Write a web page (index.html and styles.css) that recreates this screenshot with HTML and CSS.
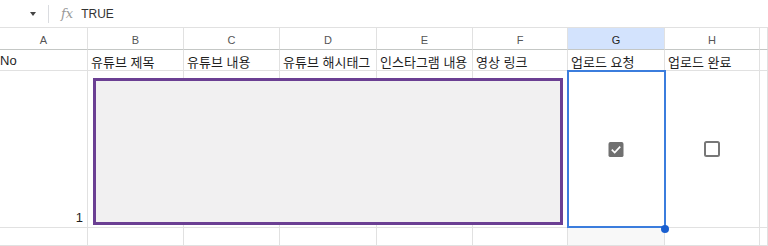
FILE: index.html
```html
<!DOCTYPE html>
<html lang="ko">
<head>
    <meta charset="UTF-8">
    <title>Sheet</title>
    <link rel="stylesheet" href="styles.css">
</head>
<body>
    <div class="formula-bar">
        <span class="name-arrow"></span>
        <span class="sep"></span>
        <span class="fx">fx</span>
        <span class="formula">TRUE</span>
    </div>
    <div class="sheet">
        <div class="grid">
            <div class="hd">A</div>
            <div class="hd">B</div>
            <div class="hd">C</div>
            <div class="hd">D</div>
            <div class="hd">E</div>
            <div class="hd">F</div>
            <div class="hd sel">G</div>
            <div class="hd">H</div>
            <div class="hd"></div>

            <div class="cell first">No</div>
            <div class="cell">유튜브 제목</div>
            <div class="cell">유튜브 내용</div>
            <div class="cell">유튜브 해시태그</div>
            <div class="cell">인스타그램 내용</div>
            <div class="cell">영상 링크</div>
            <div class="cell">업로드 요청</div>
            <div class="cell">업로드 완료</div>
            <div class="cell"></div>

            <div class="cell tall num">1</div>
            <div class="cell tall"></div>
            <div class="cell tall"></div>
            <div class="cell tall"></div>
            <div class="cell tall"></div>
            <div class="cell tall"></div>
            <div class="cell tall center"><span class="check on">
                <svg viewBox="0 0 16 16" width="16" height="16"><rect x="0" y="0" width="16" height="16" rx="2" fill="#707070"/><path d="M3.5 8.2 L6.6 11.2 L12.5 5" stroke="#fff" stroke-width="1.8" fill="none"/></svg>
            </span></div>
            <div class="cell tall center"><span class="check">
                <svg viewBox="0 0 16 16" width="16" height="16"><rect x="1" y="1" width="14" height="14" rx="1.5" fill="none" stroke="#777" stroke-width="2"/></svg>
            </span></div>
            <div class="cell tall"></div>

            <div class="cell"></div>
            <div class="cell"></div>
            <div class="cell"></div>
            <div class="cell"></div>
            <div class="cell"></div>
            <div class="cell"></div>
            <div class="cell shade"></div>
            <div class="cell"></div>
            <div class="cell"></div>
        </div>
        <div class="overlay-box"></div>
        <div class="selection"></div>
        <div class="handle"></div>
    </div>
</body>
</html>
```

FILE: styles.css
```css
body {
    margin: 0;
    font-family: "Liberation Sans", Arial, "Noto Sans CJK KR", sans-serif;
    background: #fff;
    width: 768px;
    height: 246px;
    overflow: hidden;
}
.formula-bar {
    height: 28px;
    box-sizing: border-box;
    border-bottom: 1px solid #e1e1e1;
    display: flex;
    align-items: center;
    position: relative;
}
.name-arrow {
    width: 0;
    height: 0;
    border-left: 3.5px solid transparent;
    border-right: 3.5px solid transparent;
    border-top: 4px solid #444;
    margin-left: 30px;
}
.sep {
    width: 1px;
    height: 18px;
    background: #dadce0;
    margin-left: 12px;
}
.fx {
    font-family: "DejaVu Serif", "Liberation Serif", serif;
    font-style: italic;
    color: #999;
    font-size: 13px;
    margin-left: 12px;
}
.formula {
    font-size: 12px;
    color: #333;
    margin-left: 8px;
}
.sheet {
    position: relative;
}
.grid {
    display: grid;
    grid-template-columns: 88px 96px 96px 97px 96px 95px 97px 95px 8px;
    grid-template-rows: 22px 21px 157px 18px;
}
.hd {
    box-sizing: border-box;
    border-right: 1px solid #e1e1e1;
    border-bottom: 1px solid #c4c7c5;
    font-size: 11px;
    color: #555;
    display: flex;
    align-items: center;
    justify-content: center;
    padding-top: 2px;
}
.hd.sel {
    background: #d3e3fd;
    color: #1f1f1f;
}
.cell {
    box-sizing: border-box;
    border-right: 1px solid #e1e1e1;
    border-bottom: 1px solid #e1e1e1;
    font-size: 13px;
    color: #1f1f1f;
    padding: 2px 3px 0 3px;
    white-space: nowrap;
    overflow: hidden;
}
.cell.first {
    margin-left: -3px;
    padding-top: 3px;
}
.cell.num {
    display: flex;
    align-items: flex-end;
    justify-content: flex-end;
    padding: 0 4px 2px 0;
}
.cell.center {
    display: flex;
    align-items: center;
    justify-content: center;
    padding: 0;
}
.cell.shade {
    background: #f8f8f8;
}
.check svg {
    display: block;
    width: 16px;
    height: 16px;
}
.check.on svg {
    width: 16px;
    height: 15px;
}
.overlay-box {
    position: absolute;
    left: 93px;
    top: 50px;
    width: 470px;
    height: 147px;
    box-sizing: border-box;
    border: 3px solid #6b3f93;
    background: #f1f0f1;
}
.selection {
    position: absolute;
    left: 567px;
    top: 42px;
    width: 99px;
    height: 158px;
    box-sizing: border-box;
    border: 2px solid #3b7ddd;
}
.handle {
    position: absolute;
    left: 661px;
    top: 197px;
    width: 8px;
    height: 8px;
    border-radius: 50%;
    background: #1a5fd0;
}
```
